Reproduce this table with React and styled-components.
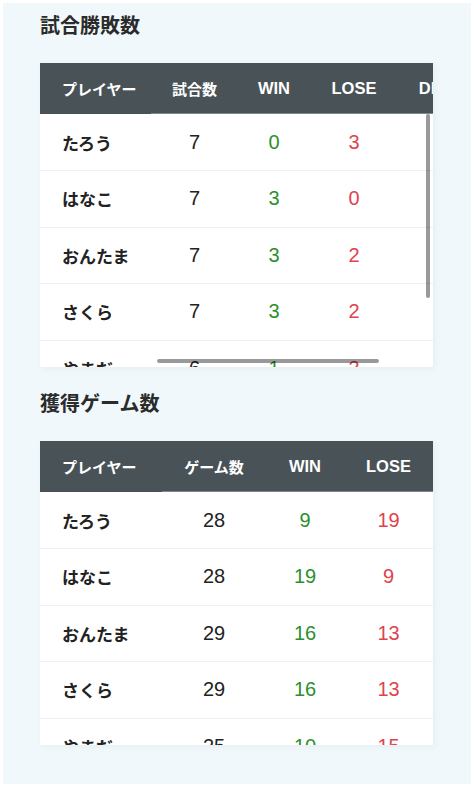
import React from "react"
import styled, {createGlobalStyle} from "styled-components"

/* page wide defaults */
const GlobalStyle = createGlobalStyle`
  body {
    margin: 0;
    background: #fff;
    font-family: "Liberation Sans", "Noto Sans CJK JP", sans-serif;
    color: #222;
  }
`

const Page = styled.div`
  margin: 3px;
  min-height: 781px;
  box-sizing: border-box;
  padding: 8px 38px 39px 37px;
  background: #f1f8fc;
`

const Title = styled.h2`
  margin: 0 0 22px;
  font-size: 20px;
  line-height: 30px;
  font-weight: 600;
  color: #2b2b2b;
`

const Section = styled.section`
  & + & {
    margin-top: 22px;
  }
`

const TableBox = styled.div`
  position: relative;
  height: 304px;
  overflow: hidden;
  background: #fff;
  box-shadow: 2px 2px 6px rgba(60, 90, 110, 0.06);
`

const Table = styled.table`
  border-collapse: collapse;
  table-layout: fixed;
`

// latin headings are set a bit bigger so they match the kana widths
const HeadCell = styled.th`
  height: 51px;
  padding: 0;
  background: #495357;
  color: #fff;
  font-size: ${p => (p.$latin ? "16.5px" : "15px")};
  font-weight: 700;
  white-space: nowrap;
  text-align: ${p => (p.$first ? "left" : "center")};
  padding-left: ${p => (p.$first ? "22px" : "0")};
  box-shadow: ${p => (p.$first ? "none" : "inset 0 -1px 0 #7d878b")};
`

const Row = styled.tr`
  height: 56.5px;
  border-bottom: 1px solid #f1f1f1;
`

const Name = styled.td`
  padding: 0 0 0 22px;
  font-size: 17px;
  font-weight: 700;
  white-space: nowrap;
`

const Num = styled.td`
  padding: 0;
  text-align: center;
  font-size: 20px;
  color: ${p => (p.$tone === "win" ? "#2b8f2b" : p.$tone === "lose" ? "#e0434d" : "#222")};
`

/* overlay scrollbars like the mac ones */
const Thumb = styled.div`
  position: absolute;
  background: rgba(0, 0, 0, 0.4);
  border-radius: 2px;
`

const matches = [
  {name: "たろう", games: 7, win: 0, lose: 3, draw: 4},
  {name: "はなこ", games: 7, win: 3, lose: 0, draw: 4},
  {name: "おんたま", games: 7, win: 3, lose: 2, draw: 2},
  {name: "さくら", games: 7, win: 3, lose: 2, draw: 2},
  {name: "やまだ", games: 6, win: 1, lose: 3, draw: 2},
]

const points = [
  {name: "たろう", games: 28, win: 9, lose: 19},
  {name: "はなこ", games: 28, win: 19, lose: 9},
  {name: "おんたま", games: 29, win: 16, lose: 13},
  {name: "さくら", games: 29, win: 16, lose: 13},
  {name: "やまだ", games: 25, win: 10, lose: 15},
]

const ScoreTable = ({title, heads, widths, rows, keys, scrollbars}) => (
  <Section>
    <Title>{title}</Title>
    <TableBox>
      <Table style={{width: widths.reduce((a, b) => a + b, 0)}}>
        <colgroup>
          {widths.map((w, i) => <col key={i} style={{width: w}} />)}
        </colgroup>
        <thead>
          <tr>
            {heads.map((h, i) => (
              <HeadCell key={h} $first={i === 0} $latin={/^[A-Z]+$/.test(h)}>{h}</HeadCell>
            ))}
          </tr>
        </thead>
        <tbody>
          {rows.map(r => (
            <Row key={r.name}>
              <Name>{r.name}</Name>
              {keys.map(k => <Num key={k} $tone={k}>{r[k]}</Num>)}
            </Row>
          ))}
        </tbody>
      </Table>
      {scrollbars && (
        <>
          <Thumb style={{left: 386, top: 51, width: 4, height: 184}} />
          <Thumb style={{left: 117, top: 296, width: 222, height: 4}} />
        </>
      )}
    </TableBox>
  </Section>
)

const App = () => (
  <>
    <GlobalStyle />
    <Page>
      <ScoreTable
        title="試合勝敗数"
        heads={["プレイヤー", "試合数", "WIN", "LOSE", "DRAW"]}
        widths={[111, 87, 72, 88, 92]}
        rows={matches}
        keys={["games", "win", "lose", "draw"]}
        scrollbars
      />
      <ScoreTable
        title="獲得ゲーム数"
        heads={["プレイヤー", "ゲーム数", "WIN", "LOSE"]}
        widths={[122, 104, 78, 89]}
        rows={points}
        keys={["games", "win", "lose"]}
      />
    </Page>
  </>
)

export default App
